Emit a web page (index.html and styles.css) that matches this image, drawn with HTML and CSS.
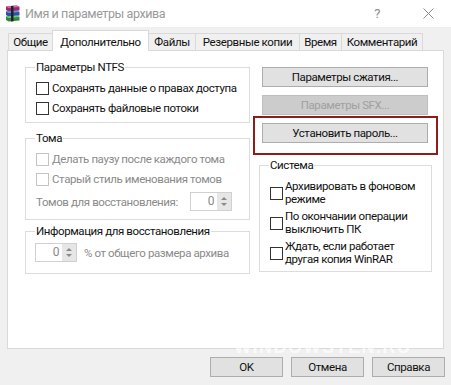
FILE: index.html
```html
<!DOCTYPE html>
<html lang="ru">
<head>
    <meta charset="UTF-8">
    <title>Имя и параметры архива</title>
    <link rel="stylesheet" href="styles.css">
</head>
<body>
    <div class="dialog">
        <div class="titlebar">
            <svg class="app-icon" viewBox="0 0 17 17">
                <path d="M2 1.5 L13 0.5 L15.5 2 L15.5 5.5 L4.5 6.5 L2 5 Z" fill="#9c2a66"/>
                <path d="M2 1.5 L13 0.5 L15.5 2 L4.5 3 Z" fill="#d86aa6"/>
                <path d="M2 6.5 L13 5.5 L15.5 7 L15.5 10.5 L4.5 11.5 L2 10 Z" fill="#2f4fa8"/>
                <path d="M2 6.5 L13 5.5 L15.5 7 L4.5 8 Z" fill="#6d8ee0"/>
                <path d="M2 11.5 L13 10.5 L15.5 12 L15.5 15.5 L4.5 16.5 L2 15 Z" fill="#2f8a3c"/>
                <path d="M2 11.5 L13 10.5 L15.5 12 L4.5 13 Z" fill="#76c77e"/>
                <path d="M7 1 L9.5 0.8 L9.5 16.2 L7 16.4 Z" fill="#222"/>
            </svg>
            <span class="title">Имя и параметры архива</span>
            <span class="caption-btn caption-help">?</span>
            <span class="caption-btn">
                <svg class="close-icon" viewBox="0 0 11 11"><path d="M0.5 0.5 L10.5 10.5 M10.5 0.5 L0.5 10.5" stroke="#8a8a8a" stroke-width="1"/></svg>
            </span>
        </div>

        <div class="tabs">
            <div class="tab tab-general">Общие</div>
            <div class="tab tab-advanced active">Дополнительно</div>
            <div class="tab tab-files">Файлы</div>
            <div class="tab tab-backup">Резервные копии</div>
            <div class="tab tab-time">Время</div>
            <div class="tab tab-comment">Комментарий</div>
        </div>

        <div class="panel">
            <div class="col-left">
                <fieldset class="group group-ntfs">
                    <legend>Параметры NTFS</legend>
                    <label class="row"><input type="checkbox" class="check"> Сохранять данные о правах доступа</label>
                    <label class="row"><input type="checkbox" class="check"> Сохранять файловые потоки</label>
                </fieldset>

                <fieldset class="group group-volumes">
                    <legend>Тома</legend>
                    <label class="row disabled"><input type="checkbox" class="check" disabled> Делать паузу после каждого тома</label>
                    <label class="row disabled"><input type="checkbox" class="check" disabled> Старый стиль именования томов</label>
                    <div class="spin-row disabled">
                        <span>Томов для восстановления:</span>
                        <div class="spin spin-volumes">
                            <span class="spin-value">0</span>
                            <span class="spin-arrows"><i class="arrow-up"></i><i class="arrow-down"></i></span>
                        </div>
                    </div>
                </fieldset>

                <fieldset class="group group-recovery">
                    <legend>Информация для восстановления</legend>
                    <div class="spin-row">
                        <div class="spin">
                            <span class="spin-value">0</span>
                            <span class="spin-arrows"><i class="arrow-up"></i><i class="arrow-down"></i></span>
                        </div>
                        <span class="muted">% от общего размера архива</span>
                    </div>
                </fieldset>
            </div>

            <div class="col-right">
                <button class="btn side-btn">Параметры сжатия...</button>
                <button class="btn side-btn btn-sfx" disabled>Параметры SFX...</button>
                <div class="highlight">
                    <button class="btn side-btn">Установить пароль...</button>
                </div>

                <fieldset class="group group-system">
                    <legend>Система</legend>
                    <label class="row row-tall"><input type="checkbox" class="check"> <span>Архивировать в фоновом<br>режиме</span></label>
                    <label class="row row-tall"><input type="checkbox" class="check"> <span>По окончании операции<br>выключить ПК</span></label>
                    <label class="row row-tall"><input type="checkbox" class="check"> <span>Ждать, если работает<br>другая копия WinRAR</span></label>
                </fieldset>
            </div>
        </div>

        <div class="footer">
            <button class="btn footer-btn">OK</button>
            <button class="btn footer-btn">Отмена</button>
            <button class="btn footer-btn">Справка</button>
        </div>

        <div class="watermark">WINDOWSTEN.RU</div>
    </div>
</body>
</html>
```

FILE: styles.css
```css
* {
    box-sizing: border-box;
}

body {
    margin: 0;
    font-family: Roboto, "Noto Sans", sans-serif;
    font-size: 11.5px;
    letter-spacing: -0.4px;
    color: #111;
    background: #f0f0f0;
}

.dialog {
    position: relative;
    width: 451px;
    height: 385px;
    overflow: hidden;
    background: #f0f0f0;
}

/* title bar */
.titlebar {
    height: 27px;
    display: flex;
    align-items: center;
    padding-left: 4px;
    background: #fff;
}

.app-icon {
    width: 17px;
    height: 17px;
    margin-right: 4px;
}

.title {
    flex: 1;
    color: #9a9a9a;
    font-size: 12.5px;
}

.caption-btn {
    width: 46px;
    text-align: center;
    color: #8a8a8a;
    font-size: 13px;
}

.caption-help {
    margin-right: 5px;
}

.close-icon {
    width: 11px;
    height: 11px;
    display: block;
    margin: 0 auto;
}

/* tabs */
.tabs {
    display: flex;
    align-items: flex-end;
    height: 20px;
    margin: 3px 0 0 8px;
}

.tab {
    height: 17px;
    margin-left: -1px;
    border: 1px solid #d9d9d9;
    border-bottom: none;
    background: #f0f0f0;
    text-align: center;
    line-height: 16px;
    white-space: nowrap;
}

.tab.active {
    position: relative;
    z-index: 1;
    height: 21px;
    margin-bottom: -1px;
    background: #fff;
    line-height: 22px;
}

.tab-general { width: 45px; margin-left: 0; }
.tab-advanced { width: 97px; }
.tab-files { width: 48px; }
.tab-backup { width: 105px; }
.tab-time { width: 43px; }
.tab-comment { width: 82px; }

/* main panel */
.panel {
    display: flex;
    gap: 9px;
    width: 437px;
    height: 299px;
    margin-left: 7px;
    padding: 8px 0 0 17px;
    background: #fff;
    border: 1px solid #d9d9d9;
}

.col-left {
    width: 225px;
    display: flex;
    flex-direction: column;
}

.col-right {
    width: 173px;
    display: flex;
    flex-direction: column;
    padding-top: 8px;
}

.group {
    margin: 0;
    min-width: 0;
    padding: 3px 10px 4px;
    border: 1px solid #dcdcdc;
}

.group legend {
    padding: 0 1px;
    margin-left: -1px;
    line-height: 16px;
}

.group-volumes {
    margin-top: 7px;
    padding-bottom: 8px;
}

.group-recovery {
    margin-top: 3px;
    padding-top: 4px;
    padding-bottom: 11px;
}

.group-system {
    margin-top: 2px;
    padding-top: 5px;
    padding-bottom: 3px;
}

.row {
    display: flex;
    align-items: center;
    gap: 3px;
    height: 20px;
    white-space: nowrap;
}

.row-tall {
    height: 30px;
    gap: 2px;
    line-height: 13.5px;
}

.row.disabled,
.spin-row.disabled > span,
.muted {
    color: #8a8a8a;
}

.check {
    appearance: none;
    flex: none;
    width: 13px;
    height: 13px;
    margin: 0;
    border: 1px solid #333;
    background: #fff;
}

.check:disabled {
    border-color: #c4c4c4;
}

/* spinner */
.spin-row {
    display: flex;
    align-items: center;
    margin-top: 3px;
    white-space: nowrap;
}

.group-recovery .spin-row {
    margin-top: 0;
    margin-left: -1px;
    gap: 7px;
}

.spin {
    display: flex;
    flex: none;
    width: 42px;
    height: 19px;
    border: 1px solid #d0d0d0;
    background: #fff;
}

.spin-volumes {
    margin-left: auto;
    margin-right: 7px;
}

.spin-value {
    flex: 1;
    text-align: right;
    padding-right: 3px;
    line-height: 17px;
    font-size: 12px;
    color: #8a8a8a;
}

.spin-arrows {
    width: 14px;
    display: flex;
    flex-direction: column;
    justify-content: space-evenly;
    align-items: center;
    background: #e6e6e6;
}

.arrow-up,
.arrow-down {
    width: 0;
    height: 0;
    border-left: 3px solid transparent;
    border-right: 3px solid transparent;
}

.arrow-up {
    border-bottom: 3px solid #8a8a8a;
}

.arrow-down {
    border-top: 3px solid #8a8a8a;
}

/* buttons */
.btn {
    height: 20px;
    padding: 0;
    font: inherit;
    letter-spacing: inherit;
    color: #111;
    background: #e1e1e1;
    border: 1px solid #adadad;
}

.btn:disabled {
    color: #a0a0a0;
    background: #cccccc;
    border-color: #bfbfbf;
}

.side-btn {
    width: 166px;
    margin-left: 3px;
}

.btn-sfx {
    margin-top: 8px;
}

.highlight {
    width: 185px;
    margin: 1px 0 0 -6px;
    padding: 5px 0 10px 7px;
    border: 2px solid #8e1c1c;
}

.highlight .side-btn {
    margin-left: 0;
}

.footer {
    display: flex;
    justify-content: flex-end;
    gap: 8px;
    padding: 8px 6px 0 0;
}

.footer-btn {
    width: 73px;
}

.watermark {
    position: absolute;
    left: 234px;
    top: 338px;
    font-family: "Liberation Sans", sans-serif;
    font-weight: bold;
    font-size: 18px;
    line-height: 1;
    letter-spacing: 1.5px;
    color: rgba(255, 255, 255, 0.7);
    pointer-events: none;
}
```
